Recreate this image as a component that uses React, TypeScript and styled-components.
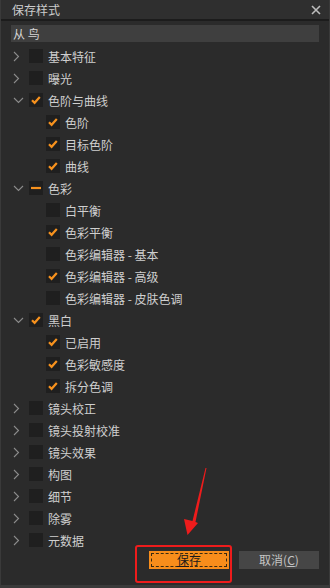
import React from "react";
import styled, { createGlobalStyle } from "styled-components";

const GlobalStyle = createGlobalStyle`
  html, body {
    margin: 0;
    padding: 0;
    background: #2b2b2b;
  }
  body {
    font-family: "Noto Sans CJK SC", "Noto Sans", sans-serif;
  }
`;

const Window = styled.div`
  position: relative;
  width: 330px;
  height: 588px;
  box-sizing: border-box;
  background: #2b2b2b;
  border-left: 1px solid #3a3a3a;
  border-right: 1px solid #3a3a3a;
  border-bottom: 3px solid #3a3a3a;
  display: flex;
  flex-direction: column;
  overflow: hidden;
`;

const TitleBar = styled.div`
  height: 20px;
  background: #2f2f2f;
  border-bottom: 2px solid #1c1c1c;
  display: flex;
  align-items: center;
  justify-content: space-between;
  padding: 0 8px 0 11px;
  color: #cccccc;
  font-size: 12px;
`;

const Search = styled.div`
  margin: 4px 10px 0 10px;
  height: 17px;
  background: #3f3f3f;
  color: #d6d6d6;
  font-size: 12px;
  display: flex;
  align-items: center;
  padding-left: 2px;
  white-space: pre;
`;

const List = styled.div`
  margin-top: 3px;
  display: flex;
  flex-direction: column;
`;

const Row = styled.div<{ $child?: boolean }>`
  height: 22px;
  display: flex;
  align-items: center;
  padding-left: ${(p) => (p.$child ? "45px" : "10px")};
  color: #cfcfcf;
  font-size: 12px;
  white-space: nowrap;
`;

const Chevron = styled.div`
  width: 18px;
  height: 22px;
  display: flex;
  align-items: center;
  padding-left: 2px;
  box-sizing: border-box;
`;

const Box = styled.div`
  width: 14px;
  height: 14px;
  background: #1f1f1f;
  margin-right: 5px;
  display: flex;
  align-items: center;
  justify-content: center;
`;

const Footer = styled.div`
  margin-top: auto;
  height: 28px;
  display: flex;
  justify-content: flex-end;
  gap: 10px;
  padding: 0 10px 7px 0;
`;

const Button = styled.button<{ $primary?: boolean }>`
  width: 80px;
  height: 18px;
  border: none;
  padding: 2px;
  font-family: inherit;
  font-size: 12px;
  background: ${(p) => (p.$primary ? "#f78d1b" : "#464646")};
  color: ${(p) => (p.$primary ? "#1a1a1a" : "#c4c4c4")};
  display: flex;
`;

const Focus = styled.span<{ $on?: boolean }>`
  flex: 1;
  display: flex;
  align-items: center;
  justify-content: center;
  border: 1px dashed ${(p) => (p.$on ? "#3a2a10" : "transparent")};
  line-height: 1;
`;

const Under = styled.span`
  text-decoration: underline;
  text-underline-offset: 1px;
`;

const RedFrame = styled.div`
  position: absolute;
  left: 134px;
  top: 545px;
  width: 93px;
  height: 34px;
  border: 2px solid #ee1c1c;
  border-radius: 3px;
`;

const Arrow = styled.svg`
  position: absolute;
  left: 176px;
  top: 466px;
`;

const Close = () => (
  <svg width="10" height="10" viewBox="0 0 10 10">
    <path d="M1 1L9 9M9 1L1 9" stroke="#bdbdbd" strokeWidth="1.6" />
  </svg>
);

const Right = () => (
  <svg width="7" height="11" viewBox="0 0 7 11">
    <path d="M1 1L5.5 5.5L1 10" stroke="#8c8c8c" strokeWidth="1.1" fill="none" />
  </svg>
);

const Down = () => (
  <svg width="11" height="7" viewBox="0 0 11 7">
    <path d="M1 1L5.5 5.5L10 1" stroke="#8c8c8c" strokeWidth="1.1" fill="none" />
  </svg>
);

type State = "off" | "on" | "mixed";

const Check = ({ state }: { state: State }) => (
  <Box>
    {state === "on" && (
      <svg width="14" height="14" viewBox="0 0 14 14">
        <path d="M3 7.2L5.6 9.8L10.8 4" stroke="#f7921e" strokeWidth="2.2" fill="none" />
      </svg>
    )}
    {state === "mixed" && (
      <svg width="14" height="14" viewBox="0 0 14 14">
        <path d="M2 7H12" stroke="#f7921e" strokeWidth="2.2" />
      </svg>
    )}
  </Box>
);

type Item = { label: string; state: State; open?: boolean; children?: { label: string; state: State }[] };

const items: Item[] = [
  { label: "基本特征", state: "off" },
  { label: "曝光", state: "off" },
  {
    label: "色阶与曲线",
    state: "on",
    open: true,
    children: [
      { label: "色阶", state: "on" },
      { label: "目标色阶", state: "on" },
      { label: "曲线", state: "on" },
    ],
  },
  {
    label: "色彩",
    state: "mixed",
    open: true,
    children: [
      { label: "白平衡", state: "off" },
      { label: "色彩平衡", state: "on" },
      { label: "色彩编辑器 - 基本", state: "off" },
      { label: "色彩编辑器 - 高级", state: "on" },
      { label: "色彩编辑器 - 皮肤色调", state: "off" },
    ],
  },
  {
    label: "黑白",
    state: "on",
    open: true,
    children: [
      { label: "已启用", state: "on" },
      { label: "色彩敏感度", state: "on" },
      { label: "拆分色调", state: "on" },
    ],
  },
  { label: "镜头校正", state: "off" },
  { label: "镜头投射校准", state: "off" },
  { label: "镜头效果", state: "off" },
  { label: "构图", state: "off" },
  { label: "细节", state: "off" },
  { label: "除雾", state: "off" },
  { label: "元数据", state: "off" },
];

export default function App() {
  return (
    <Window>
      <GlobalStyle />
      <TitleBar>
        <span>保存样式</span>
        <Close />
      </TitleBar>
      <Search>从 鸟</Search>
      <List>
        {items.map((it) => (
          <React.Fragment key={it.label}>
            <Row>
              <Chevron>{it.open ? <Down /> : <Right />}</Chevron>
              <Check state={it.state} />
              {it.label}
            </Row>
            {it.open &&
              it.children?.map((c) => (
                <Row $child key={c.label}>
                  <Check state={c.state} />
                  {c.label}
                </Row>
              ))}
          </React.Fragment>
        ))}
      </List>
      <Footer>
        <Button $primary>
          <Focus $on>
            <Under>保</Under>存
          </Focus>
        </Button>
        <Button>
          <Focus>
            取消(<Under>C</Under>)
          </Focus>
        </Button>
      </Footer>
      <RedFrame />
      <Arrow width="34" height="76" viewBox="0 0 34 76">
        <path d="M29.5 2L28.5 2L15.5 55L7 53L10.5 69L21 57L18.5 56Z" fill="#ee1c1c" />
      </Arrow>
    </Window>
  );
}
